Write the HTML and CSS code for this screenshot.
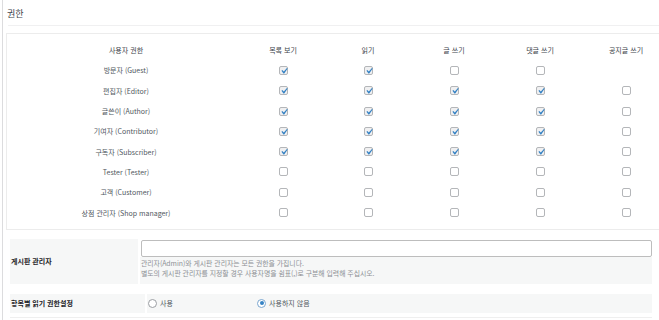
FILE: index.html
```html
<!DOCTYPE html>
<html lang="ko">
<head>
    <meta charset="UTF-8">
    <title>권한 설정</title>
    <link rel="stylesheet" href="styles.css">
</head>
<body>
    <div class="wrap">
        <div class="section-title">권한</div>

        <!-- 사용자 권한 표 -->
        <div class="perm-box">
            <div class="perm-grid" id="permGrid">
                <div class="head">사용자 권한</div>
                <div class="head">목록 보기</div>
                <div class="head">읽기</div>
                <div class="head">글 쓰기</div>
                <div class="head">댓글 쓰기</div>
                <div class="head">공지글 쓰기</div>
            </div>
        </div>

        <!-- 게시판 관리자 -->
        <div class="form-row admin-row">
            <div class="label admin-label">게시판 관리자</div>
            <div class="value admin-value">
                <div class="input-wrap"><input type="text" class="text-input"></div>
                <div class="desc">
                    관리자(Admin)와 게시판 관리자는 모든 권한을 가집니다.<br>
                    별도의 게시판 관리자를 지정할 경우 사용자명을 쉼표(,)로 구분해 입력해 주십시오.
                </div>
            </div>
        </div>

        <!-- 항목별 읽기 권한설정 -->
        <div class="form-row read-row">
            <div class="label read-label">항목별 읽기 권한설정</div>
            <div class="value read-value">
                <label class="option first"><span class="radio"></span>사용</label>
                <label class="option"><span class="radio on"></span>사용하지 않음</label>
            </div>
        </div>
        <div class="form-end"></div>
    </div>

    <script>
        // 1 = checked, 0 = unchecked, null = no checkbox
        const roles = [
            ['방문자 (Guest)', [1, 1, 0, 0, null]],
            ['편집자 (Editor)', [1, 1, 1, 1, 0]],
            ['글쓴이 (Author)', [1, 1, 1, 1, 0]],
            ['기여자 (Contributor)', [1, 1, 1, 1, 0]],
            ['구독자 (Subscriber)', [1, 1, 1, 1, 0]],
            ['Tester (Tester)', [0, 0, 0, 0, 0]],
            ['고객 (Customer)', [0, 0, 0, 0, 0]],
            ['상점 관리자 (Shop manager)', [0, 0, 0, 0, 0]]
        ];

        const checkSvg = '<svg class="tick" viewBox="0 0 20 20"><path d="M14.83 4.89l1.34.94-5.81 8.38H9.02L5.78 9.67l1.34-1.25 2.57 2.4z"/></svg>';
        const grid = document.getElementById('permGrid');

        roles.forEach(([name, perms]) => {
            const cell = document.createElement('div');
            cell.className = 'role';
            cell.innerText = name;
            grid.appendChild(cell);

            perms.forEach(p => {
                const box = document.createElement('div');
                if (p !== null) {
                    const cb = document.createElement('span');
                    cb.className = p ? 'cb on' : 'cb';
                    if (p) cb.innerHTML = checkSvg;
                    box.appendChild(cb);
                }
                grid.appendChild(box);
            });
        });
    </script>
</body>
</html>
```

FILE: styles.css
```css
body {
    margin: 0;
    background: #fff;
    font-family: 'Noto Sans CJK KR', sans-serif;
    font-size: 7px;
    color: #50575e;
    overflow: hidden;
}

.wrap {
    margin-left: 2px;
    border-left: 1px solid #dcdcde;
    min-height: 320px;
    width: 670px;
    padding-left: 3px;
}

.section-title {
    margin-left: 2px;
    padding: 8px 0 5px 0;
    text-indent: -1px;
    font-size: 9px;
    line-height: 12px;
    color: #3c434a;
    border-bottom: 1px solid #f0f0f1;
}

/* permission table */
.perm-box {
    margin-top: 7px;
    border: 1px solid #ececec;
    padding: 6px 0;
}

.perm-grid {
    display: grid;
    grid-template-columns: 238px 76px 94px 78px 94px 78px;
    grid-auto-rows: 20.3px;
    align-items: center;
    justify-items: center;
    line-height: 10px;
}

.perm-grid > div {
    display: flex;
    align-items: center;
    justify-content: center;
}

.head {
    color: #3c434a;
}

.role {
    color: #50575e;
}

.cb {
    display: block;
    position: relative;
    width: 9px;
    height: 9px;
    box-sizing: border-box;
    border: 1px solid #b4b6b9;
    border-radius: 2px;
    background: #fff;
}

.cb.on {
    background: #f0f0f1;
}

.tick {
    position: absolute;
    left: -2px;
    top: -2px;
    width: 12px;
    height: 12px;
    fill: #3582c4;
}

/* form rows */
.form-row {
    display: flex;
    margin-left: 4px;
    width: 642px;
}

.label {
    display: flex;
    align-items: center;
    padding-left: 1px;
    box-sizing: border-box;
    background: #f6f7f7;
    font-weight: bold;
    color: #1d2327;
}

.value {
    margin-left: 2px;
    flex: 1;
}

.admin-row {
    margin-top: 9px;
}

.admin-label {
    width: 128px;
}

.input-wrap {
    padding-top: 1px;
}

.text-input {
    display: block;
    margin: 0 0 0 1px;
    width: 511px;
    height: 17px;
    box-sizing: border-box;
    border: 1px solid #bdbdbd;
    border-radius: 2px;
    background: #fff;
    padding: 0 4px;
}

.desc {
    background: #f6f7f7;
    padding: 1px 0 6px 1px;
    font-size: 6.85px;
    line-height: 10px;
    color: #8c8f94;
}

.read-row {
    margin-top: 10px;
    height: 19px;
}

.read-label {
    width: 135px;
}

.read-value {
    display: flex;
    align-items: center;
    background: #f6f7f7;
    padding-left: 1px;
}

.option {
    display: flex;
    align-items: center;
    gap: 3px;
    color: #50575e;
}

.option.first {
    width: 109px;
}

.radio {
    display: inline-flex;
    align-items: center;
    justify-content: center;
    width: 9px;
    height: 9px;
    box-sizing: border-box;
    border: 1px solid #9b9ea3;
    border-radius: 50%;
    background: #fff;
}

.radio.on {
    border-color: #7ba6cf;
}

.radio.on::after {
    content: '';
    width: 4px;
    height: 4px;
    border-radius: 50%;
    background: #3582c4;
}

.form-end {
    margin: 4px 0 0 4px;
    width: 642px;
    border-top: 1px solid #efefef;
}
```
